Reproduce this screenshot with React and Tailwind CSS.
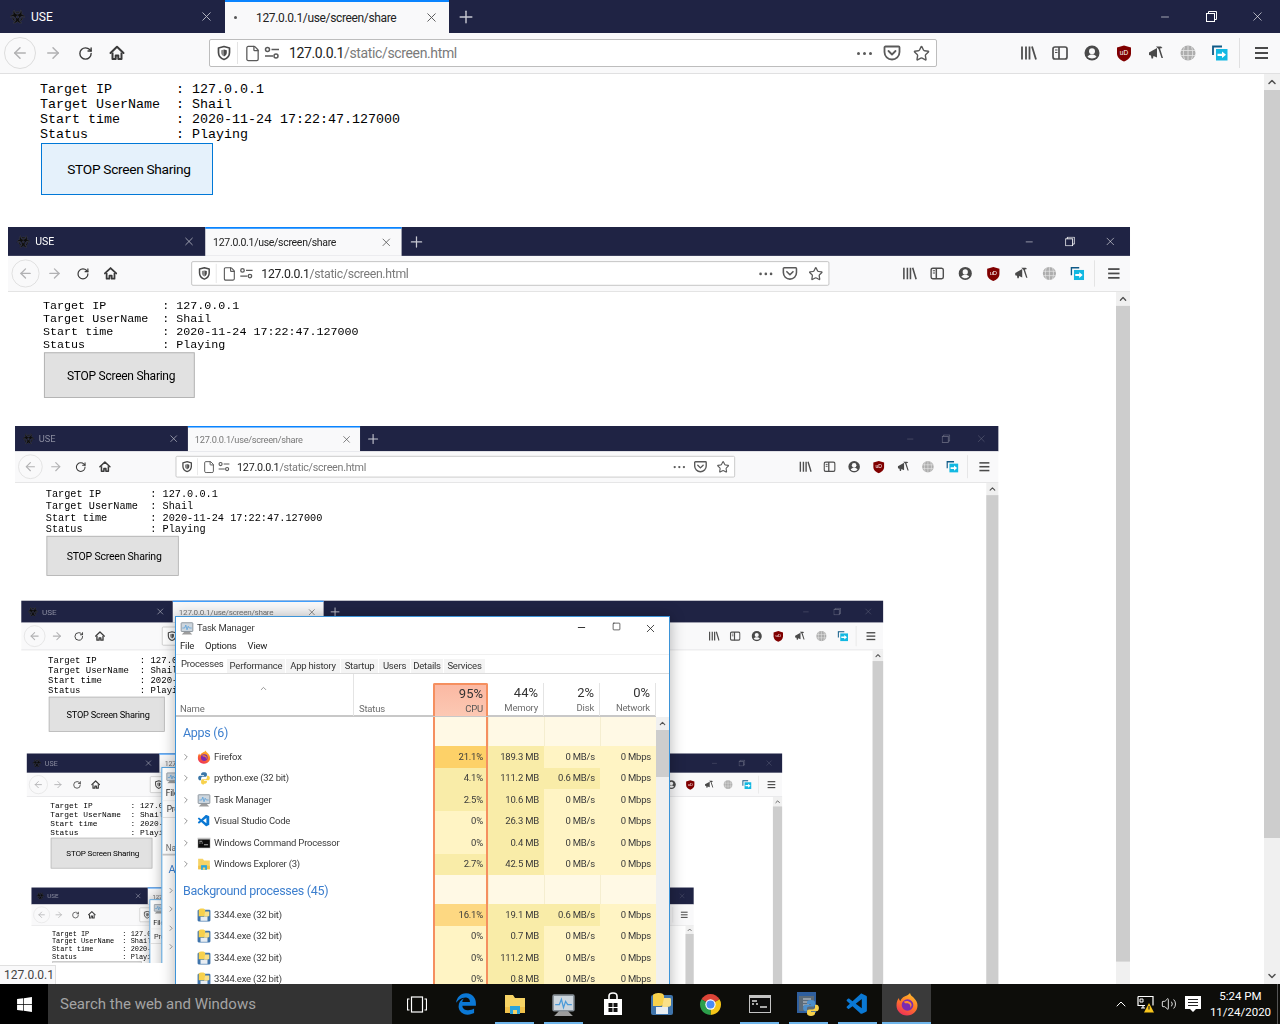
import { ArrowLeft, ArrowRight, RotateCw, ChevronRight, ChevronUp, ChevronDown, File, Star, Plus, X, Minus, Volume2, Square } from "lucide-react";
import { FaBiohazard, FaWindows, FaEdgeLegacy } from "react-icons/fa";
import { VscVscode } from "react-icons/vsc";

const MAX_DEPTH = 5;
const uiFont = "font-['Roboto',sans-serif]";

const HomeIcon = () => (
  <svg width="16" height="16" viewBox="0 0 16 16" fill="none" stroke="#3a3a3a" strokeWidth="2">
    <path d="M1.500 8L8 1.800 14.500 8" strokeLinecap="round" strokeLinejoin="round" />
    <path d="M3.500 7.500V14h3.200v-3.500h2.600V14h3.200V7.500" strokeLinejoin="round" />
  </svg>
);

const ShieldIcon = () => (
  <svg width="16" height="16" viewBox="0 0 16 16">
    <path d="M8 1.500l5.500 1.500v4.500c0 3.500-2.500 6-5.500 7-3-1-5.500-3.500-5.500-7V3z" fill="none" stroke="#4a4a4a" strokeWidth="1.700" strokeLinejoin="round" />
    <path d="M8 4.500l2.800.8v2.500c0 1.700-1.200 3-2.800 3.700z" fill="#4a4a4a" />
    <path d="M8 4.500l-2.800.8v2.500c0 1.700 1.200 3 2.800 3.700z" fill="#8a8a8a" />
  </svg>
);

const TuneIcon = () => (
  <svg width="16" height="16" viewBox="0 0 16 16" fill="none" stroke="#5a5a5a" strokeWidth="1.500">
    <circle cx="3.500" cy="4.500" r="2" />
    <path d="M7.500 4.500H15M1 11h8" />
    <circle cx="12" cy="11" r="2" />
  </svg>
);

const PocketIcon = () => (
  <svg width="18" height="18" viewBox="0 0 18 18" fill="none" stroke="#5a5a5a" strokeWidth="1.800">
    <path d="M2.500 2.500h13a1 1 0 0 1 1 1V8a7.500 7.500 0 0 1-15 0V3.500a1 1 0 0 1 1-1z" />
    <path d="M5.500 7L9 10.500 12.500 7" strokeLinecap="round" strokeLinejoin="round" />
  </svg>
);

const LibraryIcon = () => (
  <svg width="17" height="16" viewBox="0 0 17 16" fill="none" stroke="#4f4f4f" strokeWidth="1.800">
    <path d="M2 1.500V14.500M6 1.500V14.500M9.500 1.500V14.500M12 1.500L16 14.500" />
  </svg>
);

const SidebarIcon = () => (
  <svg width="16" height="16" viewBox="0 0 16 16" fill="none" stroke="#4f4f4f" strokeWidth="1.700">
    <rect x="1" y="2" width="14" height="12" rx="2" />
    <path d="M7 2V14" />
    <path d="M3 5h2.500M3 7.500h2.500" strokeWidth="1.200" />
  </svg>
);

const AccountIcon = () => (
  <svg width="16" height="16" viewBox="0 0 16 16">
    <circle cx="8" cy="8" r="7.500" fill="#4a4a4a" />
    <circle cx="8" cy="6.200" r="3" fill="#f9f9fa" />
    <path d="M3.500 11.800c1-1.700 2.700-2.300 4.500-2.300s3.500.6 4.500 2.300c-1.200 1-2.800 1.700-4.500 1.700s-3.300-.7-4.500-1.700z" fill="#f9f9fa" />
  </svg>
);

const UblockIcon = () => (
  <svg width="16" height="17" viewBox="0 0 16 17">
    <path d="M8 .5l7 2v6c0 4-3.500 6.800-7 8-3.500-1.200-7-4-7-8v-6z" fill="#800000" />
    <text x="8" y="10" textAnchor="middle" fontSize="6.500" fill="#fff" fontFamily="Liberation Sans, sans-serif">uD</text>
  </svg>
);

const HornIcon = () => (
  <svg width="17" height="16" viewBox="0 0 17 16" fill="#4a4a4a">
    <path d="M1 7.500l8-4.500v9.500L5.500 11l-.5 2.500H3.500L3 10.500 1 10z" />
    <path d="M8 1.500h5l1.500 1.500-2.500.5 3 9.500h-1.500L10.500 4z" />
  </svg>
);

const GlobeIcon = () => (
  <svg width="16" height="16" viewBox="0 0 16 16" fill="none">
    <circle cx="8" cy="8" r="7.500" fill="#adadad" />
    <path d="M0.500 5.500h15M0.500 10.500h15M8 .5v15M4.500 1.500c-1.500 4-1.500 9 0 13M11.500 1.500c1.500 4 1.500 9 0 13" stroke="#e6e6e6" strokeWidth="0.800" />
  </svg>
);

const SendTabIcon = () => (
  <svg width="16" height="16" viewBox="0 0 16 16">
    <path d="M1 10V1.500h9" fill="none" stroke="#0f5a87" strokeWidth="1.800" />
    <rect x="4" y="4" width="11.500" height="11.500" fill="#12b8e2" />
    <path d="M5.500 8.700H10V6.500l4 3.300-4 3.300v-2.200H5.500z" fill="#fff" />
  </svg>
);

const RestoreIcon = ({ color }) => (
  <svg width="11" height="11" viewBox="0 0 11 11" fill="none" stroke={color}>
    <rect x="0.500" y="2.500" width="8" height="8" />
    <path d="M2.500 2.500V.5h8v8h-2" />
  </svg>
);

const FirefoxIcon = ({ size = 24 }) => (
  <svg width={size} height={size} viewBox="0 0 24 24">
    <defs>
      <linearGradient id="ffBody" x1="0.800" y1="0" x2="0.300" y2="1">
        <stop offset="0" stopColor="#ffc02e" />
        <stop offset="0.500" stopColor="#ff7a25" />
        <stop offset="1" stopColor="#ee2f59" />
      </linearGradient>
    </defs>
    <path d="M15 1c.5 2.500 2 3 3.500 4.500 2.500 2.500 4 5 4 8 0 5.500-4.500 10-10.500 10S1.500 19 1.500 13.500C1.500 10 2.500 7.500 4 6c0 1.500.5 2.500 1.500 3 .5-2 2-3.500 4-4.500C12 3.500 14 2.500 15 1z" fill="url(#ffBody)" />
    <circle cx="12.500" cy="13" r="5.800" fill="#7d2bb0" />
    <path d="M9 9.500c2-1 5-.8 6.800 1.200 1.300 1.600 1 4-.6 5.200 1-2.500-1-5-3.500-4.700-1.200.1-2 .3-2.700-1.700z" fill="#ff8f2e" />
  </svg>
);

const ChromeIcon = () => (
  <svg width="23" height="23" viewBox="0 0 24 24">
    <path d="M12 12L2.500 6.500A11 11 0 0 1 21.500 6.500Z" fill="#dc4437" />
    <path d="M12 12L21.500 6.500A11 11 0 0 1 12 23Z" fill="#f5c518" />
    <path d="M12 12L12 23A11 11 0 0 1 2.500 6.500Z" fill="#2c9f4b" />
    <circle cx="12" cy="12" r="5.400" fill="#fff" />
    <circle cx="12" cy="12" r="4.200" fill="#4b8bf5" />
  </svg>
);

const PythonIcon = ({ size = 16 }) => (
  <svg width={size} height={size} viewBox="0 0 24 24">
    <path d="M12 2c-3 0-5 1-5 3v2h5v1H5c-2 0-3 2-3 4s1 4 3 4h2v-3c0-2 1-3 3-3h4c2 0 3-1 3-3V5c0-2-2-3-5-3z" fill="#3b77a8" />
    <path d="M12 22c3 0 5-1 5-3v-2h-5v-1h7c2 0 3-2 3-4s-1-4-3-4h-2v3c0 2-1 3-3 3h-4c-2 0-3 1-3 3v3c0 2 2 3 5 3z" fill="#f7d14c" />
  </svg>
);

const IdleIcon = () => (
  <svg width="26" height="26" viewBox="0 0 26 26">
    <rect x="1" y="1" width="19" height="21" fill="#2f5f9e" />
    <rect x="3" y="5" width="15" height="15" fill="#5c6b78" />
    <path d="M7 8h8M7 11h5M7 14h6" stroke="#c8d0d8" strokeWidth="1" />
    <path d="M15 9c-2.500 0-4 .8-4 2.400V13h4v.8H9.500c-1.600 0-2.400 1.600-2.400 3.200s.8 3.200 2.400 3.200H11V18c0-1.600.8-2.400 2.400-2.400h3.200c1.600 0 2.400-.8 2.400-2.400v-1.800C19 9.800 17.500 9 15 9z" fill="#4c8fcb" />
    <path d="M15 25c2.500 0 4-.8 4-2.400V21h-4v-.8h5.500c1.600 0 2.400-1.600 2.400-3.200s-.8-3.200-2.400-3.200H19V16c0 1.600-.8 2.400-2.400 2.400h-3.200c-1.600 0-2.400.8-2.400 2.400v1.800c0 1.600 1.500 2.400 4 2.400z" fill="#f7d14c" />
  </svg>
);

const ExeIcon = ({ size = 14 }) => (
  <svg width={size} height={size} viewBox="0 0 24 24">
    <rect x="1" y="3" width="22" height="20" rx="2" fill="#3f74ab" />
    <rect x="6" y="15" width="12" height="7" fill="#e8edf2" />
    <path d="M9 1c3 0 5 1 5 3v7c0 2-2 3-4 3H3V3c0-1 3-2 6-2z" fill="#f7d14c" />
    <path d="M14 6h6c1 0 1 1 1 2v5c0 1-2 2-4 2h-5z" fill="#f9e08a" />
  </svg>
);

const TaskMgrIcon = ({ size = 14 }) => (
  <svg width={size} height={size} viewBox="0 0 24 24">
    <path d="M3 23l5-5h8l5 5z" fill="#9c9c9c" />
    <rect x="2" y="3" width="20" height="15" rx="1" fill="#cdd6de" stroke="#868f97" strokeWidth="1.500" />
    <path d="M4 12h4l2-5 2 8 2-6 2 3h4" fill="none" stroke="#4a9ad9" strokeWidth="1.200" />
  </svg>
);

const ExplorerIcon = ({ size = 14 }) => (
  <svg width={size} height={size} viewBox="0 0 24 24">
    <path d="M2 3h8l2 3h10v15H2z" fill="#f6d365" />
    <rect x="2" y="15" width="20" height="6" fill="#f0c14a" />
    <rect x="7" y="14" width="10" height="8" fill="#2ba4dc" />
    <rect x="10" y="18" width="4" height="4" fill="#f6d365" />
  </svg>
);

const CmdIcon = ({ size = 14 }) => (
  <svg width={size} height={size} viewBox="0 0 24 24">
    <rect x="1" y="3" width="22" height="18" fill="#c3c3c3" />
    <rect x="2" y="6" width="20" height="14" fill="#0c0c0c" />
    <path d="M4 9h5M4 12h2M8 12h2M12 15h7" stroke="#dcdcdc" strokeWidth="1.400" />
  </svg>
);

const StoreIcon = () => (
  <svg width="22" height="24" viewBox="0 0 22 24">
    <path d="M2 7h18v16H2z" fill="#fff" />
    <path d="M7 8V4c0-1.500 1.500-3 4-3s4 1.500 4 3v4" fill="none" stroke="#fff" strokeWidth="1.600" />
    <path d="M6.500 11h4v4h-4zM11.500 11h4v4h-4zM6.500 16h4v4h-4zM11.500 16h4v4h-4z" fill="#111" />
  </svg>
);

const TaskViewIcon = () => (
  <svg width="20" height="17" viewBox="0 0 20 17" fill="none" stroke="#fff" strokeWidth="1.200">
    <rect x="4.500" y="1" width="11" height="15" />
    <path d="M2.500 3H.5v11h2M17.500 3h2v11h-2" />
  </svg>
);

const NetworkIcon = () => (
  <svg width="17" height="18" viewBox="0 0 17 18">
    <path d="M1 1.500h15v9" fill="none" stroke="#fff" strokeWidth="1.200" />
    <path d="M1 1.500v9h7M4 13h4M6 10.500V13" fill="none" stroke="#fff" strokeWidth="1.200" />
    <path d="M3 4h3v3H3z" fill="none" stroke="#fff" />
    <path d="M12 8l5 9.500H7z" fill="#f8c51c" />
    <path d="M12 11v3.500" stroke="#222" strokeWidth="1.200" />
  </svg>
);

const NotifyIcon = () => (
  <svg width="16" height="18" viewBox="0 0 16 18">
    <path d="M0 1h16v13h-5l-3 3-3-3H0z" fill="#fff" />
    <path d="M3 4.500h10M3 7.500h10M3 10.500h10" stroke="#222" strokeWidth="1.200" />
  </svg>
);

const toolbarIcons = [LibraryIcon, SidebarIcon, AccountIcon, UblockIcon, HornIcon, GlobeIcon, SendTabIcon];

function TabBar({ depth }) {
  const inactive = depth >= 2;
  const titleColor = inactive ? "text-[#8b8da0]" : "text-white";
  const ctrlColor = inactive ? "#6f7186" : "#ffffff";
  return (
    <div className={`flex h-[33px] bg-[#1f2344] ${uiFont} text-[12px]`}>
      <div className="flex w-[225px] items-center pl-[10px] pr-[11px]">
        <FaBiohazard size={15} className="text-[#0d0d0d]" stroke="#5a5a5a" strokeWidth={14} />
        <span className={`ml-[6px] ${titleColor}`}>USE</span>
        <X size={15} strokeWidth={1.500} className="ml-auto text-[#b9bbc6]" />
      </div>
      <div className="flex w-[224px] items-center border-t-2 border-[#0a84ff] bg-[#f9f9fa] pl-[9px] pr-[10px]">
        {depth === 0 && <span className="mr-[19px] h-[3px] w-[3px] rounded-full bg-[#555555]" />}
        <span className={`tracking-[-0.35px] ${inactive ? "text-[#777777]" : "text-[#222222]"}`}>127.0.0.1/use/screen/share</span>
        <X size={15} strokeWidth={1.500} className="ml-auto text-[#555555]" />
      </div>
      <div className="flex w-[34px] items-center justify-center">
        <Plus size={20} strokeWidth={1.700} className="text-[#c8c9d2]" />
      </div>
      <div className="ml-auto flex">
        <div className="flex w-[46px] items-center justify-center">
          <Minus size={12} strokeWidth={1.200} color={ctrlColor} />
        </div>
        <div className="flex w-[46px] items-center justify-center">
          <RestoreIcon color={ctrlColor} />
        </div>
        <div className="flex w-[46px] items-center justify-center">
          <X size={15} strokeWidth={1} color={ctrlColor} />
        </div>
      </div>
    </div>
  );
}

function Toolbar() {
  return (
    <div className="flex h-[41px] items-center border-b border-[#e0e0e1] bg-[#f9f9fa]">
      <div className="ml-[4px] flex h-[32px] w-[32px] items-center justify-center rounded-full border border-[#dddddd]">
        <ArrowLeft size={18} className="text-[#b1b1b3]" />
      </div>
      <div className="ml-[1px] flex w-[32px] justify-center">
        <ArrowRight size={18} className="text-[#b1b1b3]" />
      </div>
      <div className="flex w-[32px] justify-center">
        <RotateCw size={15} strokeWidth={2.200} className="text-[#3a3a3a]" />
      </div>
      <div className="flex w-[32px] justify-center">
        <HomeIcon />
      </div>
      <div className={`ml-[76px] flex h-[28px] w-[728px] items-center rounded-[2px] border border-[#bdbdbd] bg-white ${uiFont}`}>
        <div className="flex h-[22px] w-[28px] items-center justify-center border-r border-[#e4e4e4]">
          <ShieldIcon />
        </div>
        <File size={17} strokeWidth={1.800} className="ml-[6px] text-[#5a5a5a]" />
        <div className="ml-[3px]">
          <TuneIcon />
        </div>
        <span className="ml-[9px] pt-[1px] text-[14px] tracking-[-0.36px] text-[#222222]">127.0.0.1</span>
        <span className="pt-[1px] text-[14px] tracking-[-0.36px] text-[#7a7a7a]">/static/screen.html</span>
        <div className="ml-auto flex items-center gap-[3px] pr-[6px]">
          <span className="h-[3px] w-[3px] rounded-full bg-[#5a5a5a]" />
          <span className="h-[3px] w-[3px] rounded-full bg-[#5a5a5a]" />
          <span className="h-[3px] w-[3px] rounded-full bg-[#5a5a5a]" />
          <span className="ml-[8px]">
            <PocketIcon />
          </span>
          <span className="ml-[9px]">
            <Star size={17} strokeWidth={2} className="text-[#5a5a5a]" />
          </span>
        </div>
      </div>
      <div className="ml-[75px] flex">
        {toolbarIcons.map((Icon, i) => (
          <div key={i} className="flex h-[20px] w-[32px] items-center justify-center">
            <Icon />
          </div>
        ))}
      </div>
      <div className="ml-[3px] h-[30px] w-px bg-[#e0e0e1]" />
      <div className="ml-[5px] flex w-[32px] flex-col items-center gap-[3px]">
        <span className="h-[2px] w-[13px] bg-[#4a4a4a]" />
        <span className="h-[2px] w-[13px] bg-[#4a4a4a]" />
        <span className="h-[2px] w-[13px] bg-[#4a4a4a]" />
      </div>
    </div>
  );
}

function PageText({ depth }) {
  const button =
    depth === 0
      ? "border-[#0078d7] bg-[#e5f1fb]"
      : "border-[#adadad] bg-[#e1e1e1]";
  return (
    <>
      <pre className="font-['Liberation_Mono',monospace] text-[13.333px] leading-[15px] text-black">
        {"Target IP        : 127.0.0.1\nTarget UserName  : Shail\nStart time       : 2020-11-24 17:22:47.127000\nStatus           : Playing"}
      </pre>
      <button className={`ml-[1px] mt-[1px] block h-[52px] w-[172px] border pl-[4px] text-[13.700px] tracking-[-0.3px] text-black ${uiFont} ${button}`}>
        STOP Screen Sharing
      </button>
    </>
  );
}

const tmTabs = [
  { label: "Performance", cls: "w-[58px]" },
  { label: "App history", cls: "w-[54px]" },
  { label: "Startup", cls: "w-[37px]" },
  { label: "Users", cls: "w-[31px]" },
  { label: "Details", cls: "w-[32px]" },
  { label: "Services", cls: "w-[41px]" },
];

const apps = [
  { name: "Firefox", Icon: FirefoxIcon, cpu: "21.1%", cpuBg: "bg-[#fdd168]", mem: "189.3 MB", disk: "0 MB/s" },
  { name: "python.exe (32 bit)", Icon: PythonIcon, cpu: "4.1%", cpuBg: "bg-[#f9eca8]", mem: "111.2 MB", disk: "0.6 MB/s", diskBg: "bg-[#f9eca8]" },
  { name: "Task Manager", Icon: TaskMgrIcon, cpu: "2.5%", cpuBg: "bg-[#f9eca8]", mem: "10.6 MB", disk: "0 MB/s" },
  { name: "Visual Studio Code", Icon: ({ size }) => <VscVscode size={size} color="#0a78d4" />, cpu: "0%", mem: "26.3 MB", disk: "0 MB/s" },
  { name: "Windows Command Processor", Icon: CmdIcon, cpu: "0%", mem: "0.4 MB", disk: "0 MB/s" },
  { name: "Windows Explorer (3)", Icon: ExplorerIcon, cpu: "2.7%", cpuBg: "bg-[#f9eca8]", mem: "42.5 MB", disk: "0 MB/s" },
];

const background = [
  { name: "3344.exe (32 bit)", cpu: "16.1%", cpuBg: "bg-[#fdd882]", mem: "19.1 MB", disk: "0.6 MB/s", diskBg: "bg-[#f9eca8]", noArrow: true },
  { name: "3344.exe (32 bit)", cpu: "0%", mem: "0.7 MB", disk: "0 MB/s", noArrow: true },
  { name: "3344.exe (32 bit)", cpu: "0%", mem: "111.2 MB", disk: "0 MB/s", noArrow: true },
  { name: "3344.exe (32 bit)", cpu: "0%", mem: "0.8 MB", disk: "0 MB/s", noArrow: true },
];

const tmColumns = "grid grid-cols-[178px_79px_55px_56px_56px_56px]";

function TmRow({ row }) {
  const Icon = row.Icon || ExeIcon;
  return (
    <div className={`${tmColumns} h-[21.5px] items-stretch text-[#3a3a3a]`}>
      <div className="flex items-center pl-[5px]">
        <span className="w-[16px]">
          {!row.noArrow && <ChevronRight size={10} className="text-[#808080]" />}
        </span>
        <Icon size={14} />
        <span className="ml-[3px]">{row.name}</span>
      </div>
      <div />
      <div className={`flex items-center justify-end border-x-2 border-[#f58f5f] pr-[3px] ${row.cpuBg || "bg-[#fff4c4]"}`}>{row.cpu}</div>
      <div className="flex items-center justify-end bg-[#f9eca8] pr-[5px]">{row.mem}</div>
      <div className={`flex items-center justify-end pr-[5px] ${row.diskBg || "bg-[#fff4c4]"}`}>{row.disk}</div>
      <div className="flex items-center justify-end bg-[#fff4c4] pr-[5px]">0 Mbps</div>
    </div>
  );
}

function TmGroup({ title }) {
  return (
    <div className={`${tmColumns} h-[29px]`}>
      <div className="col-span-2 flex items-center pl-[7px] pt-[3px] text-[12.500px] tracking-[-0.3px] text-[#3d7fce]">{title}</div>
      <div className="border-x-2 border-[#f58f5f] bg-[#fff9e5]" />
      <div className="border-l border-[#f5eed0] bg-[#fff9e5]" />
      <div className="border-l border-[#f5eed0] bg-[#fff9e5]" />
      <div className="border-l border-[#f5eed0] bg-[#fff9e5]" />
    </div>
  );
}

function TaskManager() {
  return (
    <div className={`absolute left-[175px] top-[616px] h-[440px] w-[495px] border border-[#3d94d8] bg-white text-[9.500px] tracking-[-0.2px] shadow-[0_0_14px_rgba(0,0,0,0.3)] blur-[0.3px] ${uiFont}`}>
      <div className="flex h-[22px] items-center pl-[4px]">
        <TaskMgrIcon size={14} />
        <span className="ml-[3px] text-[#3a3a3a]">Task Manager</span>
        <div className="ml-auto flex">
          <div className="flex w-[35px] justify-center">
            <Minus size={11} className="text-[#222222]" />
          </div>
          <div className="flex w-[35px] justify-center">
            <Square size={9} strokeWidth={1.800} className="text-[#222222]" />
          </div>
          <div className="flex w-[35px] justify-center pr-[2px]">
            <X size={13} strokeWidth={1.500} className="text-[#222222]" />
          </div>
        </div>
      </div>
      <div className="flex h-[16px] items-center gap-[11px] border-b border-[#f0f0f0] pl-[4px] text-[#222222]">
        <span>File</span>
        <span>Options</span>
        <span>View</span>
      </div>
      <div className="flex h-[19px] border-b border-[#dcdcdc] text-[#333333]">
        <div className="w-[51px] pl-[5px] pt-[2px]">Processes</div>
        {tmTabs.map((tab) => (
          <div key={tab.label} className={`mr-[1px] mt-[4px] flex items-center justify-center bg-[#f4f4f4] ${tab.cls}`}>
            {tab.label}
          </div>
        ))}
      </div>
      <div className="flex">
        <div className="w-[480px]">
          <div className={`${tmColumns} h-[43px] border-b-2 border-[#c8c8c8] text-[#6d6d6d]`}>
            <div className="relative border-r border-[#e4e4e4]">
              <ChevronUp size={9} className="absolute left-[83px] top-[10px] text-[#777777]" />
              <span className="absolute bottom-0 left-[4px]">Name</span>
            </div>
            <div className="relative">
              <span className="absolute bottom-0 left-[5px]">Status</span>
            </div>
            <div className="mt-[9px] flex flex-col items-end rounded-t-[2px] border-x-2 border-t-2 border-[#f58f5f] bg-gradient-to-b from-[#fbb9a3] to-[#fcc8b3] pr-[3px] pt-[1px] leading-[15px] text-[#555555]">
              <span className="text-[13px] tracking-normal text-[#333333]">95%</span>
              <span>CPU</span>
            </div>
            <div className="mt-[9px] flex flex-col items-end border-r border-[#e4e4e4] pr-[5px] pt-[2px] leading-[15px]">
              <span className="text-[13px] tracking-normal text-[#333333]">44%</span>
              <span>Memory</span>
            </div>
            <div className="mt-[9px] flex flex-col items-end border-r border-[#e4e4e4] pr-[5px] pt-[2px] leading-[15px]">
              <span className="text-[13px] tracking-normal text-[#333333]">2%</span>
              <span>Disk</span>
            </div>
            <div className="mt-[9px] flex flex-col items-end border-r border-[#e4e4e4] pr-[5px] pt-[2px] leading-[15px]">
              <span className="text-[13px] tracking-normal text-[#333333]">0%</span>
              <span>Network</span>
            </div>
          </div>
          <TmGroup title="Apps (6)" />
          {apps.map((row) => (
            <TmRow key={row.name} row={row} />
          ))}
          <TmGroup title="Background processes (45)" />
          {background.map((row, i) => (
            <TmRow key={i} row={row} />
          ))}
        </div>
        <div className="mt-[43px] w-[13px] bg-[#f0f0f0]">
          <div className="flex h-[13px] items-center justify-center">
            <ChevronUp size={9} strokeWidth={3} className="text-[#555555]" />
          </div>
          <div className="h-[47px] bg-[#cdcdcd]" />
        </div>
      </div>
    </div>
  );
}

function Scrollbar() {
  return (
    <div className="flex w-[16px] flex-col bg-[#f0f0f0]">
      <div className="flex h-[16px] items-center justify-center">
        <ChevronUp size={12} strokeWidth={3} className="text-[#505050]" />
      </div>
      <div className="h-[748px] bg-[#cdcdcd]" />
      <div className="mt-auto flex h-[16px] items-center justify-center">
        <ChevronDown size={12} strokeWidth={3} className="text-[#505050]" />
      </div>
    </div>
  );
}

function Screen({ depth }) {
  return (
    <div className="relative flex h-[984px] w-[1280px] flex-col overflow-hidden bg-white">
      <TabBar depth={depth} />
      <Toolbar />
      <div className="flex min-h-0 flex-1">
        <div className="relative flex-1 overflow-hidden pl-[40px] pt-[8px]">
          <PageText depth={depth} />
          {depth < MAX_DEPTH && (
            <div className="absolute left-[8px] top-[153px] origin-top-left scale-[0.8766] blur-[0.25px]">
              <Screen depth={depth + 1} />
            </div>
          )}
        </div>
        <Scrollbar />
      </div>
      {depth === 0 && (
        <div className="absolute bottom-0 left-0 h-[21px] w-[175px] bg-white">
          <div className={`absolute bottom-0 left-0 flex h-[19px] w-[56px] items-center border-r border-t border-[#e0e0e0] bg-[#f9f9fa] pl-[4px] text-[12px] text-[#444444] ${uiFont}`}>
            127.0.0.1
          </div>
        </div>
      )}
      <TaskManager />
    </div>
  );
}

const taskbarApps = [
  { key: "view", node: <TaskViewIcon /> },
  { key: "edge", node: <FaEdgeLegacy size={22} color="#0b78d6" /> },
  { key: "explorer", node: <ExplorerIcon size={24} />, open: true },
  { key: "taskmgr", node: <TaskMgrIcon size={25} />, open: true },
  { key: "store", node: <StoreIcon /> },
  { key: "python-files", node: <ExeIcon size={24} /> },
  { key: "chrome", node: <ChromeIcon /> },
  { key: "cmd", node: <CmdIcon size={24} />, open: true },
  { key: "idle", node: <IdleIcon />, open: true },
  { key: "vscode", node: <VscVscode size={25} color="#0a78d4" />, open: true },
  { key: "firefox", node: <FirefoxIcon size={24} />, open: true, active: true },
];

function Taskbar() {
  return (
    <div className={`flex h-[40px] bg-[#0d0d0a] text-white ${uiFont}`}>
      <div className="flex w-[48px] items-center justify-center bg-black">
        <FaWindows size={17} />
      </div>
      <div className="flex w-[344px] items-center bg-[#333333] pl-[12px] text-[15px] text-[#a4a4a4]">
        Search the web and Windows
      </div>
      {taskbarApps.map((item) => (
        <div key={item.key} className={`relative flex w-[49px] items-center justify-center ${item.active ? "bg-[#3a3a3a]" : ""}`}>
          {item.node}
          {item.open && <span className={`absolute bottom-0 h-[2px] bg-[#6fb5ea] ${item.active ? "inset-x-0" : "inset-x-[5px]"}`} />}
        </div>
      ))}
      <div className="ml-auto flex items-center">
        <div className="flex w-[24px] justify-center">
          <ChevronUp size={16} strokeWidth={1.500} />
        </div>
        <div className="flex w-[24px] justify-center">
          <NetworkIcon />
        </div>
        <div className="flex w-[24px] justify-center">
          <Volume2 size={16} strokeWidth={1.300} />
        </div>
        <div className="flex w-[24px] justify-center">
          <NotifyIcon />
        </div>
        <div className="flex w-[71px] flex-col items-center text-[11.500px] leading-[16px]">
          <span>5:24 PM</span>
          <span>11/24/2020</span>
        </div>
        <div className="ml-[1px] h-full w-[3px] border-l border-[#555555]" />
      </div>
    </div>
  );
}

export default function App() {
  return (
    <div className="h-[1024px] w-[1280px] overflow-hidden">
      <Screen depth={0} />
      <Taskbar />
    </div>
  );
}
